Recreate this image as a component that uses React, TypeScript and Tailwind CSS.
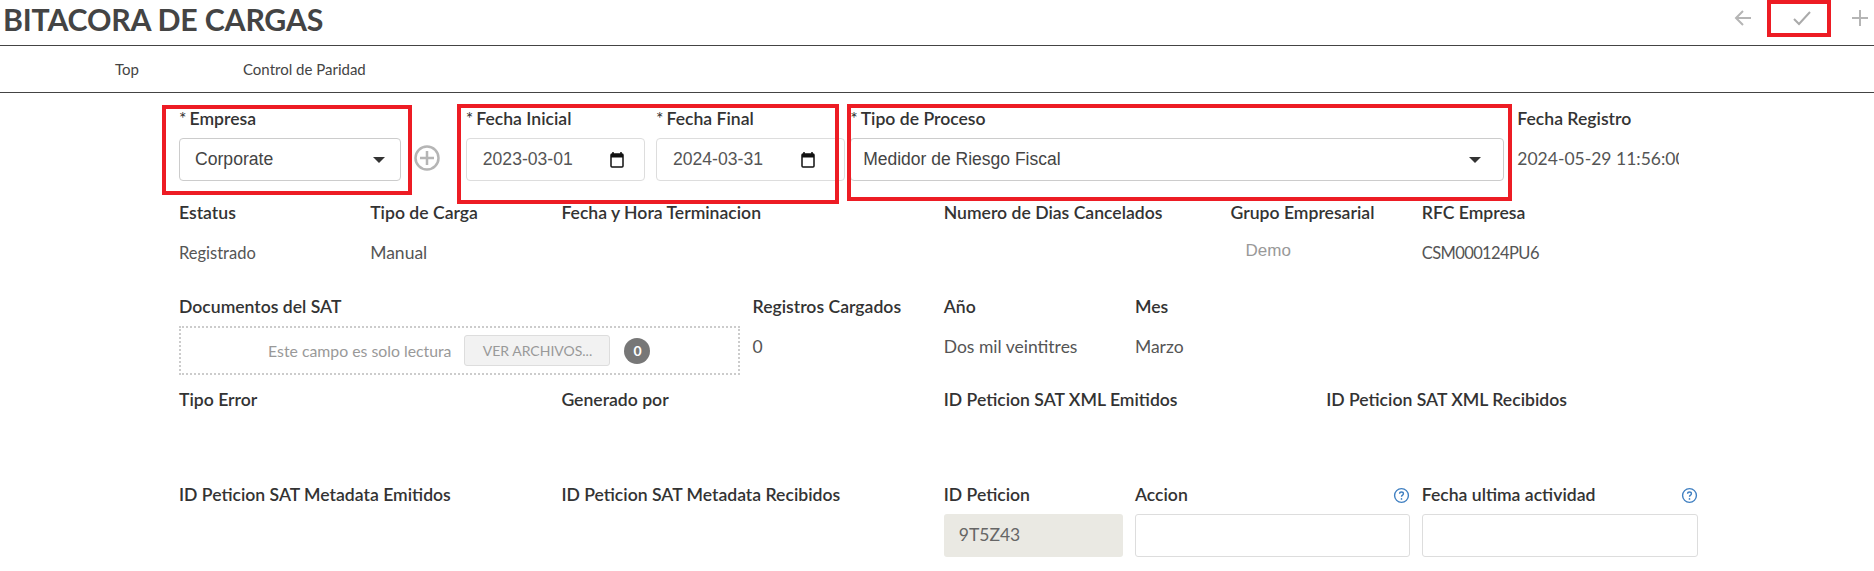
const lato = "font-['Lato','Noto_Sans',sans-serif]";

function Label({ children, req = false }: { children: React.ReactNode; req?: boolean }) {
  return (
    <div className="h-[20px] text-[17.6px] leading-[20px] font-semibold text-[#333] whitespace-nowrap">
      {req && <span className="font-normal mr-[3px]">*</span>}
      {children}
    </div>
  );
}

function Value({ children }: { children?: React.ReactNode }) {
  return <div className="mt-[20px] h-[20px] text-[17.5px] leading-[20px] text-[#555] whitespace-nowrap">{children}</div>;
}

function Caret() {
  return <span className="w-0 h-0 border-x-[6px] border-x-transparent border-t-[6px] border-t-[#333]" />;
}

function Help() {
  return (
    <svg width="17" height="17" viewBox="0 0 16 16" fill="none" className="shrink-0">
      <circle cx="8" cy="8" r="6.5" stroke="#3f7fc1" strokeWidth="1.3" />
      <path d="M6.2 6.4c0-1 .8-1.7 1.8-1.7s1.8.7 1.8 1.6c0 1.3-1.8 1.4-1.8 2.9" stroke="#3f7fc1" strokeWidth="1.3" />
      <circle cx="8" cy="11.2" r=".8" fill="#3f7fc1" />
    </svg>
  );
}

function DateField({ value, iconGap }: { value: string; iconGap: string }) {
  return (
    <div className={`mt-[9px] h-[43px] rounded-[4px] border border-[#ddd] bg-white flex items-center justify-between pl-[16px] ${iconGap} text-[17.6px] text-[#555] font-['Liberation_Sans',sans-serif]`}>
      {value}
      <svg width="14" height="16" viewBox="0 0 14 16" fill="none">
        <path d="M3 0v3M11 0v3" stroke="#111" strokeWidth="1.5" />
        <rect x="1" y="2" width="12" height="13" rx="1" stroke="#111" strokeWidth="1.5" />
        <rect x="1" y="2" width="12" height="3.5" fill="#111" />
      </svg>
    </div>
  );
}

const row = "grid grid-cols-[repeat(16,95.6px)] pl-[179px]";
const box = "mt-[9px] h-[43px] rounded-[4px] border border-[#ccc] bg-white";
const redBox = "absolute border-[4px] border-[#ed1c24] pointer-events-none";

export default function App() {
  return (
    <div className={`relative w-[1874px] h-[571px] overflow-hidden bg-white ${lato}`}>
      {/* header */}
      <div className="h-[46px] flex items-start justify-between border-b border-[#444] pl-[3px]">
        <h1 className="text-[30.3px] leading-[38px] font-bold text-[#444] tracking-[-0.2px]">BITACORA DE CARGAS</h1>
        <div className="flex items-center h-[36px] text-[#aaa]">
          <svg width="20" height="20" viewBox="0 0 20 20" fill="none" stroke="#b5b5b5" strokeWidth="2" className="mr-[39px]">
            <path d="M18 10H3M10 3l-7 7 7 7" />
          </svg>
          <svg width="20" height="16" viewBox="0 0 20 16" fill="none" stroke="#aaa" strokeWidth="2" className="mr-[40px]">
            <path d="M2 9l5 5L18 2" />
          </svg>
          <svg width="16" height="16" viewBox="0 0 16 16" fill="none" stroke="#b5b5b5" strokeWidth="2" className="mr-[6px]">
            <path d="M8 0v16M0 8h16" />
          </svg>
        </div>
      </div>

      {/* tabs */}
      <div className="h-[47px] flex items-center border-b border-[#444] text-[15px] text-[#444] pl-[115px]">
        <span className="w-[128px]">Top</span>
        <span>Control de Paridad</span>
      </div>

      {/* fila 1 */}
      <div className={`${row} mt-[16px]`}>
        <div className="col-span-3">
          <Label req>Empresa</Label>
          <div className="flex items-center">
            <div className={`${box} w-[222px] flex items-center justify-between px-[15px] font-['Liberation_Sans',sans-serif] text-[17.6px] text-[#444]`}>
              Corporate
              <Caret />
            </div>
            <svg width="28" height="28" viewBox="0 0 28 28" fill="none" stroke="#b5b5b5" strokeWidth="2.5" className="ml-[12px] mt-[6px]">
              <circle cx="14" cy="14" r="11.5" />
              <path d="M14 7v14M7 14h14" />
            </svg>
          </div>
        </div>
        <div className="col-span-2 pr-[12px]">
          <Label req>Fecha Inicial</Label>
          <DateField value="2023-03-01" iconGap="pr-[20px]" />
        </div>
        <div className="col-span-2 pr-[3px] -ml-[1px]">
          <Label req>Fecha Final</Label>
          <DateField value="2024-03-31" iconGap="pr-[29px]" />
        </div>
        <div className="col-span-7">
          <div className="pl-[2px]"><Label req>Tipo de Proceso</Label></div>
          <div className={`${box} ml-[2px] w-[654px] flex items-center justify-between pl-[12px] pr-[22px] font-['Liberation_Sans',sans-serif] text-[17.5px] text-[#444]`}>
            Medidor de Riesgo Fiscal
            <Caret />
          </div>
        </div>
        <div className="col-span-2 w-[162px] overflow-hidden">
          <Label>Fecha Registro</Label>
          <div className="mt-[20px] text-[17.5px] leading-[20px] text-[#555] whitespace-nowrap">2024-05-29 11:56:00</div>
        </div>
      </div>

      {/* fila 2 */}
      <div className={`${row} mt-[22px]`}>
        <div className="col-span-2">
          <Label>Estatus</Label>
          <div className="mt-[20px] h-[20px] text-[16.5px] leading-[20px] text-[#555]">Registrado</div>
        </div>
        <div className="col-span-2">
          <Label>Tipo de Carga</Label>
          <Value>Manual</Value>
        </div>
        <div className="col-span-4">
          <Label>Fecha y Hora Terminacion</Label>
        </div>
        <div className="col-span-3">
          <Label>Numero de Dias Cancelados</Label>
        </div>
        <div className="col-span-2">
          <Label>Grupo Empresarial</Label>
          <div className="mt-[18px] pl-[15px] text-[17px] leading-[20px] text-[#999] font-['Liberation_Sans',sans-serif]">Demo</div>
        </div>
        <div className="col-span-2">
          <Label>RFC Empresa</Label>
          <div className="mt-[20px] h-[20px] text-[16.5px] leading-[20px] tracking-[-0.6px] text-[#555]">CSM000124PU6</div>
        </div>
      </div>

      {/* fila 3 */}
      <div className={`${row} mt-[34px]`}>
        <div className="col-span-6 pr-[13px]">
          <Label>Documentos del SAT</Label>
          <div className="mt-[9px] h-[49px] border-2 border-dotted border-[#ccc] flex items-center justify-center">
            <span className="text-[15.8px] text-[#999]">Este campo es solo lectura</span>
            <span className="ml-[13px] h-[31px] w-[146px] rounded-[3px] border border-[#ddd] bg-[#f2f2f2] flex items-center justify-center text-[14px] text-[#999]">VER ARCHIVOS...</span>
            <span className="ml-[14px] h-[26px] w-[26px] rounded-full bg-[#777] flex items-center justify-center text-[14px] font-bold text-white">0</span>
          </div>
        </div>
        <div className="col-span-2">
          <Label>Registros Cargados</Label>
          <Value>0</Value>
        </div>
        <div className="col-span-2">
          <Label>Año</Label>
          <Value>Dos mil veintitres</Value>
        </div>
        <div className="col-span-2">
          <Label>Mes</Label>
          <Value>Marzo</Value>
        </div>
      </div>

      {/* fila 4 */}
      <div className={`${row} mt-[15px]`}>
        <div className="col-span-4"><Label>Tipo Error</Label></div>
        <div className="col-span-4"><Label>Generado por</Label></div>
        <div className="col-span-4"><Label>ID Peticion SAT XML Emitidos</Label></div>
        <div className="col-span-4"><Label>ID Peticion SAT XML Recibidos</Label></div>
      </div>

      {/* fila 5 */}
      <div className={`${row} mt-[75px]`}>
        <div className="col-span-4"><Label>ID Peticion SAT Metadata Emitidos</Label></div>
        <div className="col-span-4"><Label>ID Peticion SAT Metadata Recibidos</Label></div>
        <div className="col-span-2 pr-[12px]">
          <Label>ID Peticion</Label>
          <div className="mt-[9px] h-[43px] rounded-[3px] bg-[#eae9e3] flex items-center pl-[15px] text-[17.5px] text-[#666]">9T5Z43</div>
        </div>
        <div className="col-span-3 w-[275px]">
          <div className="flex items-center justify-between">
            <Label>Accion</Label>
            <Help />
          </div>
          <div className="mt-[9px] h-[43px] rounded-[3px] border border-[#ddd] bg-white" />
        </div>
        <div className="col-span-3 w-[276px]">
          <div className="flex items-center justify-between">
            <Label>Fecha ultima actividad</Label>
            <Help />
          </div>
          <div className="mt-[9px] h-[43px] rounded-[3px] border border-[#ddd] bg-white" />
        </div>
      </div>

      {/* marcas rojas sobre la captura */}
      <div className={`${redBox} left-[162px] top-[105px] w-[250px] h-[90px]`} />
      <div className={`${redBox} left-[457px] top-[104px] w-[382px] h-[100px]`} />
      <div className={`${redBox} left-[847px] top-[104px] w-[665px] h-[97px]`} />
      <div className={`${redBox} left-[1767px] top-0 w-[64px] h-[37px]`} />
    </div>
  );
}
